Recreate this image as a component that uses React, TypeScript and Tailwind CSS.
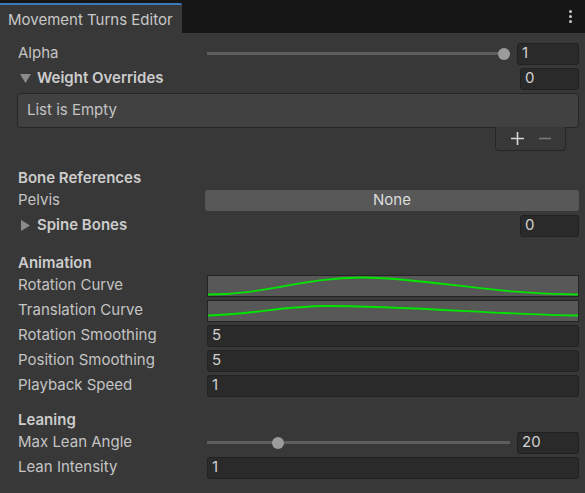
import React from 'react';

const font = { fontFamily: 'Inter, "Noto Sans", sans-serif' };

function Label({ children, bold }: { children: React.ReactNode; bold?: boolean }) {
  return (
    <span className={`w-[189px] shrink-0 text-[15px] ${bold ? 'font-semibold text-[#cccccc]' : 'text-[#c4c4c4]'}`}>
      {children}
    </span>
  );
}

function Field({ value, className = '' }: { value: string; className?: string }) {
  return (
    <div
      className={`h-[22px] flex items-center px-[4px] rounded-[3px] bg-[#2a2a2a] border border-[#212121] text-[15px] text-[#d2d2d2] ${className}`}
    >
      {value}
    </div>
  );
}

function Slider({ pct }: { pct: number }) {
  return (
    <div className="relative flex-1 h-[22px] flex items-center">
      <div className="w-full h-[3px] bg-[#5e5e5e]" />
      <div
        className="absolute top-1/2 -translate-y-1/2 -translate-x-1/2 w-[12px] h-[12px] rounded-full bg-[#9b9b9b]"
        style={{ left: `calc(6px + (100% - 12px) * ${pct})` }}
      />
    </div>
  );
}

function Curve({ d }: { d: string }) {
  return (
    <div className="flex-1 h-[22px] bg-[#585858] border border-[#232323]">
      <svg viewBox="0 0 370 20" preserveAspectRatio="none" className="w-full h-full block">
        <path d={d} fill="none" stroke="#00e600" strokeWidth="1.8" />
      </svg>
    </div>
  );
}

function Row({ children }: { children: React.ReactNode }) {
  return <div className="h-[25px] flex items-center">{children}</div>;
}

export default function App() {
  return (
    <div className="w-[585px] h-[493px] bg-[#383838] flex flex-col overflow-hidden" style={font}>
      {/* Tab bar */}
      <div className="h-[33px] bg-[#161616] flex items-end justify-between shrink-0">
        <div className="w-[182px] h-[30px] bg-[#383838] border-t-2 border-[#3a79bb] flex items-center pl-[8px] rounded-tr-[2px]">
          <span className="text-[15px] text-[#c8c8c8] leading-none">Movement Turns Editor</span>
        </div>
        <div className="self-center flex flex-col gap-[2px] mr-[13px]">
          <div className="w-[3px] h-[3px] rounded-full bg-[#c8c8c8]" />
          <div className="w-[3px] h-[3px] rounded-full bg-[#c8c8c8]" />
          <div className="w-[3px] h-[3px] rounded-full bg-[#c8c8c8]" />
        </div>
      </div>

      <div className="flex flex-col pl-[18px] pr-[6px] pt-[8px]">
        <Row>
          <Label>Alpha</Label>
          <Slider pct={1} />
          <Field value="1" className="w-[62px] ml-[7px]" />
        </Row>
        <Row>
          <div className="flex items-center flex-1">
            <svg width="11" height="9" viewBox="0 0 11 9" className="ml-[2px] mr-[6px]">
              <path d="M0 0 L11 0 L5.5 9 Z" fill="#8a8a8a" />
            </svg>
            <span className="text-[15px] font-semibold text-[#cccccc]">Weight Overrides</span>
          </div>
          <Field value="0" className="w-[59px]" />
        </Row>

        {/* Empty list */}
        <div className="mt-[2px] h-[35px] -ml-[1px] rounded-[4px] bg-[#414141] border border-[#262626] flex items-center pl-[9px] text-[15px] text-[#c4c4c4]">
          List is Empty
        </div>
        <div className="flex justify-end pr-[13px]">
          <div className="-mt-[1px] w-[71px] h-[24px] border border-t-0 border-[#262626] rounded-b-[4px] bg-[#383838] flex items-center justify-center gap-[15px]">
            <svg width="13" height="13" viewBox="0 0 13 13">
              <path d="M6.5 0 V13 M0 6.5 H13" stroke="#d6d6d6" strokeWidth="1.6" />
            </svg>
            <svg width="12" height="13" viewBox="0 0 12 13">
              <path d="M0 6.5 H12" stroke="#7a7a7a" strokeWidth="1.6" />
            </svg>
          </div>
        </div>

        {/* Bone references */}
        <div className="mt-[17px] h-[20px] flex items-center">
          <Label bold>Bone References</Label>
        </div>
        <Row>
          <span className="w-[187px] shrink-0 text-[15px] text-[#c4c4c4]">Pelvis</span>
          <div className="flex-1 h-[21px] rounded-[3px] bg-[#585858] flex items-center justify-center text-[15px] text-[#dedede]">
            None
          </div>
        </Row>
        <Row>
          <div className="flex items-center flex-1">
            <svg width="9" height="11" viewBox="0 0 9 11" className="ml-[3px] mr-[7px]">
              <path d="M0 0 L9 5.5 L0 11 Z" fill="#8a8a8a" />
            </svg>
            <span className="text-[15px] font-semibold text-[#cccccc]">Spine Bones</span>
          </div>
          <Field value="0" className="w-[59px]" />
        </Row>

        {/* Animation */}
        <div className="mt-[15px] h-[20px] flex items-center">
          <Label bold>Animation</Label>
        </div>
        <Row>
          <Label>Rotation Curve</Label>
          <Curve d="M0 18.5 C 60 18.5, 95 1.5, 154 1.5 C 215 1.5, 285 18.5, 370 18.5" />
        </Row>
        <Row>
          <Label>Translation Curve</Label>
          <Curve d="M0 14.5 C 45 13.5, 75 5, 118 5 C 200 5, 300 14, 370 14.5" />
        </Row>
        <Row>
          <Label>Rotation Smoothing</Label>
          <Field value="5" className="flex-1" />
        </Row>
        <Row>
          <Label>Position Smoothing</Label>
          <Field value="5" className="flex-1" />
        </Row>
        <Row>
          <Label>Playback Speed</Label>
          <Field value="1" className="flex-1" />
        </Row>

        {/* Leaning */}
        <div className="mt-[12px] h-[20px] flex items-center">
          <Label bold>Leaning</Label>
        </div>
        <Row>
          <Label>Max Lean Angle</Label>
          <Slider pct={20 / 90} />
          <Field value="20" className="w-[62px] ml-[7px]" />
        </Row>
        <Row>
          <Label>Lean Intensity</Label>
          <Field value="1" className="flex-1" />
        </Row>
      </div>
    </div>
  );
}
